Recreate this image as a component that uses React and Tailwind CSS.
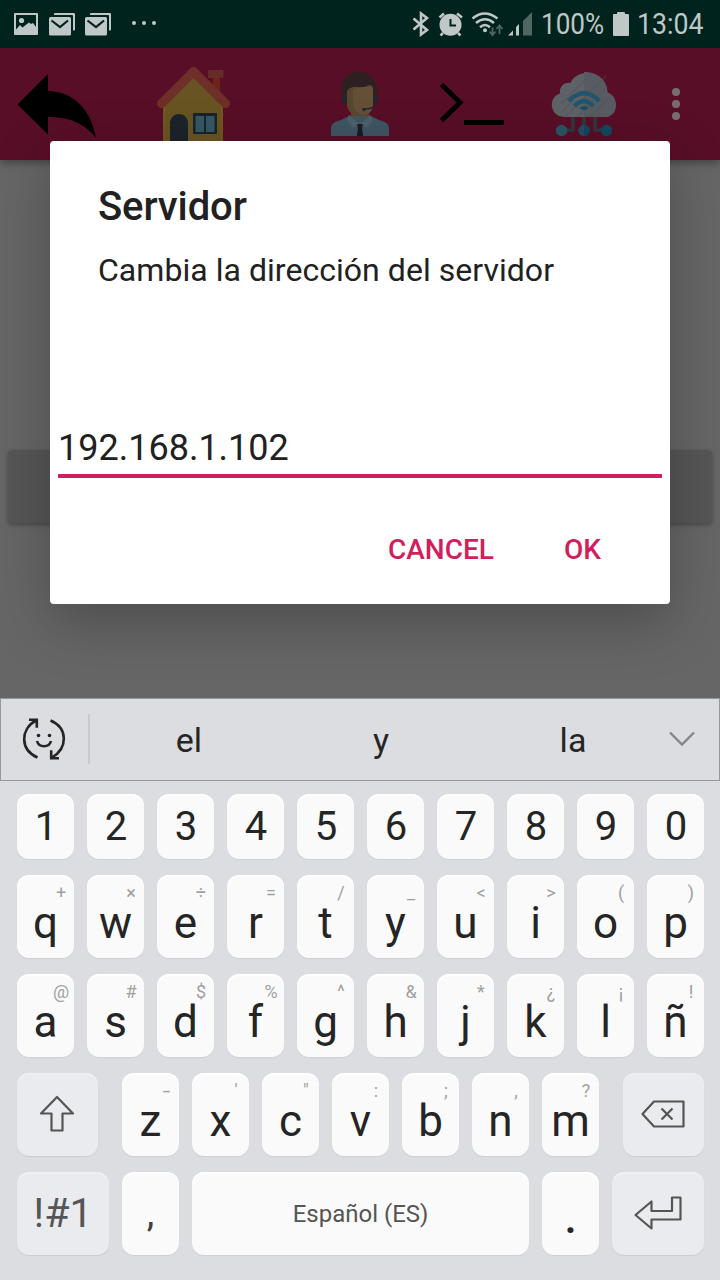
import React from "react";

const DIGITS = ["1", "2", "3", "4", "5", "6", "7", "8", "9", "0"];
const ROW_TOP = [["q", "+"], ["w", "×"], ["e", "÷"], ["r", "="], ["t", "/"], ["y", "_"], ["u", "<"], ["i", ">"], ["o", "("], ["p", ")"]];
const ROW_HOME = [["a", "@"], ["s", "#"], ["d", "$"], ["f", "%"], ["g", "^"], ["h", "&"], ["j", "*"], ["k", "¿"], ["l", "¡"], ["ñ", "!"]];
const ROW_BOTTOM = [["z", "-"], ["x", "'"], ["c", "\""], ["v", ":"], ["b", ";"], ["n", ","], ["m", "?"]];

const KEY = "relative shrink-0 rounded-[12px] bg-[#fafafa] text-center shadow-[0_1px_1px_#cfd0d4,inset_0_2px_1px_#ffffff]";
const FN_KEY = "flex shrink-0 items-center justify-center rounded-[12px] bg-[#e9ebee] text-[#555555] shadow-[0_1px_1px_#cbccd0,inset_0_2px_1px_#eff0f2]";

function LetterKey({ label, alt }) {
  return (
    <div className={`${KEY} h-[83px] w-[57px] pt-[13px] text-[44px] leading-[70px] text-[#252525]`}>
      {label}
      <span className={`absolute top-0 left-[31.5px] w-[25px] text-center text-[18px] leading-[35px] text-[#a0a0a0] ${alt === "-" ? "scale-x-150" : ""}`}>{alt}</span>
    </div>
  );
}

function MailIcon() {
  return (
    <svg className="h-[24px] w-[27px]" viewBox="49 11 27 24">
      <path d="M54 14V13q0-1 1-1H74q1 0 1 1V28.500q0 1-1 1H73V15q0-1-1-1Z" fill="#bfc8c6" />
      <rect x="49" y="16" width="22" height="18.500" rx="1.500" fill="#bfc8c6" />
      <path d="M51.500 19.500 60 26l8-6.500" fill="none" stroke="#00231e" strokeWidth="2.200" />
    </svg>
  );
}

function StatusBar() {
  return (
    <div className="flex h-[48px] items-center bg-[#00231e] text-[#bfc8c6]">
      <svg className="ml-[14px] h-[24px] w-[24px]" viewBox="14 11 24 24">
        <path fillRule="evenodd" d="M15 12H37q1 0 1 1V33q0 1-1 1H15q-1 0-1-1V13q0-1 1-1ZM16 14V28.500L20 24l2.500 2.500L29 21.500 31 23l2-1 3 4V14Z" fill="#bfc8c6" />
        <circle cx="21.500" cy="19.500" r="2.600" fill="#bfc8c6" />
      </svg>
      <div className="ml-[11px] flex gap-[9px]"><MailIcon /><MailIcon /></div>
      <div className="ml-[20px] flex gap-[6px] pb-[2px]">
        <i className="size-[4px] rounded-full bg-[#bfc8c6]" />
        <i className="size-[4px] rounded-full bg-[#bfc8c6]" />
        <i className="size-[4px] rounded-full bg-[#bfc8c6]" />
      </div>
      <svg className="ml-[256px] h-[26px] w-[124px]" viewBox="412 10 124 26" fill="none">
        <path d="M413.500 17.500 427 29l-6 4.500V12.500l6 4.500L413.500 28.500" stroke="#bfc8c6" strokeWidth="2.600" />
        <circle cx="450.500" cy="23.800" r="11" fill="#bfc8c6" />
        <path d="M450.500 18v6.500h5.500" stroke="#00231e" strokeWidth="2" />
        <path d="M439.500 16.500 444 12.500M457 12.500l5 4M443 32l-2.500 2.500M458 32l2.500 2.500" stroke="#bfc8c6" strokeWidth="2.500" />
        <g stroke="#bfc8c6" strokeWidth="2.500">
          <path d="M472.500 17.500q12-10 25 0" />
          <path d="M476 22q9-7.500 18 0" />
          <path d="M480 26.200q5-4.500 10 0" />
        </g>
        <circle cx="485" cy="29.200" r="2" fill="#bfc8c6" />
        <path d="M492.500 26.500v7M489.500 30.500l3 3.500 3-3.500M499.500 33v-8M496.500 28l3-3.500 3 3.500" stroke="#4e6763" strokeWidth="1.800" />
        <path d="M508 34.500l5-5v5Z" fill="#bfc8c6" />
        <path d="M516 34.500V26l3-3v11.500Z" fill="#bfc8c6" />
        <path d="M523 34.500V20l9-9v23.500Z" fill="#4e6763" />
      </svg>
      <span className="ml-[5px] w-[66px] origin-left scale-x-[0.87] text-[30px] leading-[48px]">100%</span>
      <svg className="ml-[6px] h-[24px] w-[16px]" viewBox="613 11 16 24">
        <path d="M617 13V12q0-1 1-1h6q1 0 1 1v1h3q1 0 1 1V34q0 1-1 1H614q-1 0-1-1V14q0-1 1-1Z" fill="#bfc8c6" />
      </svg>
      <span className="ml-[8px] w-[66px] origin-left scale-x-[0.89] text-[30px] leading-[48px]">13:04</span>
    </div>
  );
}

function Toolbar() {
  return (
    <div className="flex h-[112px] items-start bg-[#580e27] pt-[16px] shadow-[0_3px_8px_rgba(0,0,0,0.35)]">
      <svg className="ml-[16px] h-[80px] w-[82px] shrink-0" viewBox="16 64 82 80">
        <path d="M17.500 104.500 48 74V91C68 91 90 104 96 138 83 121 66 117 48 117V134.500Z" fill="#000" />
      </svg>
      <svg className="ml-[58px] h-[80px] w-[76px] shrink-0" viewBox="156 64 76 80">
        <rect x="213" y="76" width="7" height="19" fill="#6c2418" />
        <rect x="208" y="70" width="15.500" height="8" rx="1" fill="#682c28" />
        <path d="M163 104 193.500 74 223 104V146H163Z" fill="#685322" />
        <path d="M164.500 104v42M221.500 104v42" stroke="#76561e" strokeWidth="2" />
        <path d="M161.500 103.500 193.500 71.500 225.500 103.500" fill="none" stroke="#6e2f29" strokeWidth="9" strokeLinecap="round" strokeLinejoin="round" />
        <path d="M170 146V122q2-8 9-8t9 8v24Z" fill="#1a242a" />
        <rect x="193" y="113" width="24" height="21" rx="1" fill="#17242c" />
        <rect x="195.500" y="116" width="8.500" height="16" fill="#355763" />
        <rect x="206" y="116" width="8.500" height="16" fill="#355763" />
      </svg>
      <svg className="ml-[98px] h-[80px] w-[60px] shrink-0" viewBox="330 64 60 80">
        <path d="M342 94C340 80 348 72 359 72 371 72 378 81 377 94Z" fill="#2d2021" />
        <rect x="342" y="94" width="36" height="10" rx="4" fill="#23262e" />
        <path d="M351 108h18v12l-9 8-9-8Z" fill="#5d4326" />
        <path d="M331 136v-9q1-5 10-7l8-4h22l8 4q9 2 10 7v9Z" fill="#3f5562" />
        <path d="M350 115l10 9 9-9v7l-9 8-10-8Z" fill="#5d4326" />
        <path d="M349 115l11 9-7 4-6-8ZM370 115l-10 9 7 4 6-8Z" fill="#4a616e" />
        <path d="M347 91q4-5 11-4 7 1 11-2 4 0 4 5v15c0 7-6 11-13 11s-13-5-13-11Z" fill="#594630" />
        <path d="M353 90q5-3 12-3 5-2 8 1v17c0 6-5 10-11 10-6-3-9-7-9-12Z" fill="#655037" />
        <path d="M375.500 102c0 5-4 7-10 7" fill="none" stroke="#24262d" strokeWidth="1.600" />
        <circle cx="364" cy="109.500" r="1.800" fill="#24262d" />
        <path d="M357 124h6l-1 3 1 9h-6l1-9Z" fill="#171d28" />
      </svg>
      <svg className="ml-[49px] h-[80px] w-[66px] shrink-0" viewBox="439 64 66 80" fill="none" stroke="#000">
        <path d="M441.500 84.500 460 102.500 441.500 120.500" strokeWidth="5" />
        <path d="M464 122.500h40" strokeWidth="5" />
      </svg>
      <svg className="ml-[46px] h-[80px] w-[66px] shrink-0" viewBox="551 64 66 80">
        <path d="M573 116v14h-8M584 116v10M595 116v14h8" fill="none" stroke="#35363c" strokeWidth="3.600" />
        <path d="M564 117C549 116 548 97 560 93.500 559 86 565 82 570.500 83 576 68.500 604 68 607.500 92.500 620 97 618 117 605 117Z" fill="#5e6166" />
        <path d="M584 72c13 0 23 7 23.500 20.500C620 97 618 117 605 117H584Z" fill="#585b62" />
        <path d="M562 112l12-12M566 116l40-40M577 117l31-31M590 117l22-22M561 104l30-30" stroke="#4f535a" strokeOpacity="0.45" strokeWidth="1.200" />
        <g fill="none" stroke="#1f566b" strokeWidth="4.300">
          <path d="M568.500 101q15.500-15.500 31 0" />
          <path d="M574.500 106q9.500-9.500 19 0" />
        </g>
        <path d="M579.500 108q4.500-4 9 0l-3 2h-3Z" fill="#174e69" />
        <circle cx="561.500" cy="130.500" r="5.700" fill="#285564" />
        <circle cx="584" cy="130.500" r="5.700" fill="#224d5f" />
        <path d="M584 124.800a5.700 5.700 0 0 1 0 11.400Z" fill="#114660" />
        <circle cx="606.500" cy="130.500" r="5.700" fill="#124760" />
      </svg>
      <div className="ml-[55px] flex flex-col gap-[4px] pt-[24px]">
        <i className="size-[8px] rounded-full bg-[#786e72]" />
        <i className="size-[8px] rounded-full bg-[#786e72]" />
        <i className="size-[8px] rounded-full bg-[#786e72]" />
      </div>
    </div>
  );
}

function Dialog() {
  return (
    <div className="absolute top-[141px] left-[50px] flex h-[463px] w-[620px] flex-col rounded-[4px] bg-white text-[#212121] shadow-[0_18px_56px_rgba(0,0,0,0.26)]">
      <h1 className="mt-[42px] ml-[48px] text-[40px] leading-[48px] font-medium tracking-[-0.1px]">Servidor</h1>
      <p className="mt-[19px] ml-[48px] text-[32px] leading-[40px] tracking-[0.04px]">Cambia la dirección del servidor</p>
      <div className="mx-[8px] mt-[137px] h-[51px] border-b-4 border-[#d11e5d] text-[36px] leading-[42px]">192.168.1.102</div>
      <div className="mt-[52px] flex pl-[338px] text-[28px] leading-[40px] font-medium text-[#d11e5d]">
        <span className="w-[176px]">CANCEL</span>
        <span>OK</span>
      </div>
    </div>
  );
}

function Suggestions() {
  return (
    <div className="flex h-[83px] items-start border border-[#95979b] text-[34px] leading-[83px] text-[#252525]">
      <svg className="mt-[14px] ml-[20px] h-[50px] w-[48px]" viewBox="21 713 48 50" fill="none" stroke="#252525" strokeWidth="2.600">
        <path d="M37.500 757.500C20 750 20 729 36 720.500M29 719.800h7.800v8M50.500 720.500C68 728 68 748 52 757.500M59 758.200h-7.800v-8" />
        <path d="M37 741c2 7 12 7 14 0" />
        <circle cx="38.500" cy="735.500" r="1.800" fill="#252525" stroke="none" />
        <circle cx="49.500" cy="735.500" r="1.800" fill="#252525" stroke="none" />
      </svg>
      <div className="mt-[15px] ml-[19px] h-[50px] w-[2px] bg-[#c9cacd]" />
      <div className="ml-[3px] grid w-[576px] grid-cols-3 text-center">
        <span>el</span><span>y</span><span>la</span>
      </div>
      <svg className="mt-[31px] h-[18px] w-[26px]" viewBox="669 730 26 18" fill="none" stroke="#85868a" strokeWidth="2.400">
        <path d="M670 732.500l12 12 12-12" />
      </svg>
    </div>
  );
}

function Keyboard() {
  return (
    <div className="relative flex h-[582px] flex-col bg-[#dcdde1]">
      <Suggestions />
      <div className="flex flex-col gap-[16px] px-[17px] pt-[13px]">
        <div className="flex gap-[13px]">
          {DIGITS.map((d) => (
            <div key={d} className={`${KEY} h-[65px] w-[57px] pl-px text-[40px] leading-[65px] text-[#252525]`}>{d}</div>
          ))}
        </div>
        <div className="flex gap-[13px]">{ROW_TOP.map(([l, a]) => <LetterKey key={l} label={l} alt={a} />)}</div>
        <div className="flex gap-[13px]">{ROW_HOME.map(([l, a]) => <LetterKey key={l} label={l} alt={a} />)}</div>
        <div className="flex gap-[24px]">
          <div className={`${FN_KEY} h-[83px] w-[81px]`}>
            <svg className="h-[41px] w-[39px]" viewBox="38 1094 39 41" fill="none" stroke="#555555" strokeWidth="2.200" strokeLinejoin="round">
              <path d="M57 1097 73 1113.500H62.500V1130.500H51.500V1113.500H41Z" />
            </svg>
          </div>
          <div className="flex gap-[13px]">{ROW_BOTTOM.map(([l, a]) => <LetterKey key={l} label={l} alt={a} />)}</div>
          <div className={`${FN_KEY} h-[83px] w-[81px]`}>
            <svg className="h-[31px] w-[47px]" viewBox="640 1099 47 31" fill="none" stroke="#555555" strokeWidth="2.200" strokeLinejoin="round">
              <path d="M642.500 1114 654 1101.500H683.500V1126.500H654ZM661.500 1108.500l11 11M672.500 1108.500l-11 11" />
            </svg>
          </div>
        </div>
        <div className="flex gap-[13px]">
          <div className={`${FN_KEY} h-[83px] w-[92px] text-[41px] leading-[83px]`}>!#1</div>
          <div className={`${KEY} h-[83px] w-[57px] pt-[3px] text-[38px] leading-[77px] text-[#404040]`}>,</div>
          <div className={`${KEY} h-[83px] w-[337px] pt-px text-[24px] leading-[83px] text-[#555555]`}>Español (ES)</div>
          <div className={`${KEY} h-[83px] w-[57px] pt-[9px] text-[44px] leading-[75px] font-medium text-[#252525]`}>.</div>
          <div className={`${FN_KEY} h-[83px] w-[92px]`}>
            <svg className="h-[41px] w-[50px]" viewBox="633 1193 50 41" fill="none" stroke="#555555" strokeWidth="2.200" strokeLinejoin="round">
              <path d="M635.500 1215 651.500 1201.500V1211H672V1197.500H680.500V1219.500H651.500V1228.500Z" />
            </svg>
          </div>
        </div>
      </div>
    </div>
  );
}

export default function App() {
  return (
    <div className="relative flex h-[1280px] w-[720px] flex-col overflow-hidden bg-[#666666] font-[Roboto,sans-serif]">
      <StatusBar />
      <Toolbar />
      <div className="h-[538px] px-[8px] pt-[290px]">
        <div className="h-[73px] rounded-[4px] bg-[#565656] shadow-[0_2px_4px_rgba(0,0,0,0.3)]" />
      </div>
      <Dialog />
      <Keyboard />
    </div>
  );
}
